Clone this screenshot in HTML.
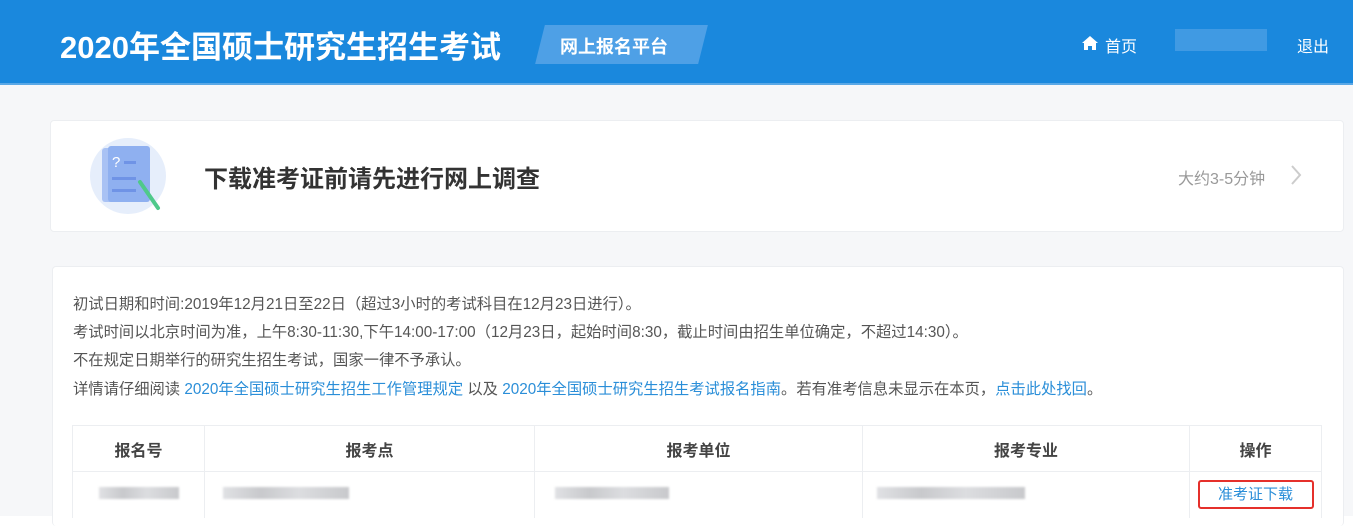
<!DOCTYPE html>
<html><head><meta charset="utf-8"><style>
*{margin:0;padding:0;box-sizing:border-box}
body{width:1353px;height:532px;background:#fff;font-family:"Liberation Sans","Noto Sans CJK SC",sans-serif;position:relative;overflow:hidden}
.bg{position:absolute;left:0;top:0;width:1353px;height:516px;background:#f6f7f9}
.hdr{position:absolute;left:0;top:0;width:1353px;height:85px;background:#1a88dd;border-bottom:2px solid #5aa8e6}
.title{position:absolute;left:60px;top:22px;color:#fff;font-size:31px;font-weight:bold}
.tag{position:absolute;left:540px;top:25px;width:163px;height:39px;background:#4ea0e6;transform:skewX(-14deg)}
.tagt{position:absolute;left:560px;top:33px;color:#fff;font-size:18px;font-weight:bold}
.nav{position:absolute;top:33px;color:#fff;font-size:16px}
.card{position:absolute;background:#fff;border:1px solid #eceef1;border-radius:4px}
.info{position:absolute;left:73px;font-size:15.3px;color:#555;white-space:nowrap}
.info a{color:#2a8ed8;text-decoration:none}
table{position:absolute;left:72px;top:425px;width:1250px;border-collapse:collapse;font-size:16px}
th{height:46px;font-weight:bold;color:#444;border:1px solid #eceef1}
td{height:46px;border:1px solid #eceef1;border-bottom:none;text-align:center}
.blur{display:inline-block;height:12px;background:linear-gradient(90deg,#e0e1e4,#c8c9cc 30%,#dcdde0 60%,#c8c9cc);filter:blur(1px)}
</style></head><body>
<div class="bg"></div>
<div class="hdr"></div>
<div class="title">2020年全国硕士研究生招生考试</div>
<div class="tag"></div>
<div class="tagt">网上报名平台</div>
<svg style="position:absolute;left:1081px;top:35px" width="18" height="16" viewBox="0 0 18 16"><path d="M9 1L1 8h2v7h4v-4h4v4h4V8h2z" fill="#fff"/></svg>
<div class="nav" style="left:1105px">首页</div>
<div style="position:absolute;left:1175px;top:29px;width:92px;height:22px;background:#4a9fe5;opacity:.8"></div>
<div class="nav" style="left:1297px">退出</div>

<div class="card" style="left:50px;top:120px;width:1294px;height:112px"></div>
<svg style="position:absolute;left:88px;top:136px" width="80" height="80" viewBox="0 0 80 80">
<circle cx="40" cy="40" r="38" fill="#e6eefb"/>
<rect x="14" y="12" width="42" height="54" rx="3" fill="#a9c2f4"/>
<rect x="20" y="10" width="42" height="56" rx="3" fill="#8fb0f0"/>
<text x="24" y="31" font-size="15" fill="#fff" font-family="Liberation Sans">?</text>
<rect x="36" y="25" width="12" height="3" fill="#6f93e6"/>
<rect x="24" y="41" width="24" height="3" fill="#6f93e6"/>
<rect x="24" y="53" width="24" height="3" fill="#6f93e6"/>
<path d="M52 46L70 72" stroke="#4fc98a" stroke-width="4" stroke-linecap="round"/>
</svg>
<div style="position:absolute;left:204px;top:159px;font-size:24px;font-weight:bold;color:#333">下载准考证前请先进行网上调查</div>
<div style="position:absolute;left:1178px;top:165px;font-size:16px;color:#999">大约3-5分钟</div>
<svg style="position:absolute;left:1289px;top:164px" width="14" height="22" viewBox="0 0 14 22"><path d="M3 2l8 9-8 9" stroke="#ccc" stroke-width="2" fill="none"/></svg>

<div class="card" style="left:52px;top:266px;width:1292px;height:260px;border-bottom:none"></div>
<div class="info" style="top:292px">初试日期和时间:2019年12月21日至22日（超过3小时的考试科目在12月23日进行）。</div>
<div class="info" style="top:320px">考试时间以北京时间为准，上午8:30-11:30,下午14:00-17:00（12月23日，起始时间8:30，截止时间由招生单位确定，不超过14:30）。</div>
<div class="info" style="top:348px">不在规定日期举行的研究生招生考试，国家一律不予承认。</div>
<div class="info" style="top:377px">详情请仔细阅读 <a>2020年全国硕士研究生招生工作管理规定</a> 以及 <a>2020年全国硕士研究生招生考试报名指南</a>。若有准考信息未显示在本页，<a>点击此处找回</a>。</div>
<table>
<tr><th style="width:132px">报名号</th><th style="width:330px">报考点</th><th style="width:328px">报考单位</th><th style="width:327px">报考专业</th><th>操作</th></tr>
<tr><td><span class="blur" style="width:80px"></span></td><td style="text-align:left;padding-left:18px"><span class="blur" style="width:126px"></span></td><td style="text-align:left;padding-left:20px"><span class="blur" style="width:114px"></span></td><td style="text-align:left;padding-left:14px"><span class="blur" style="width:148px"></span></td>
<td><span style="display:inline-block;width:116px;height:29px;border:2px solid #e5302b;border-radius:3px;color:#2a8ed8;font-size:15px;line-height:25px">准考证下载</span></td></tr>
</table>
</body></html>
